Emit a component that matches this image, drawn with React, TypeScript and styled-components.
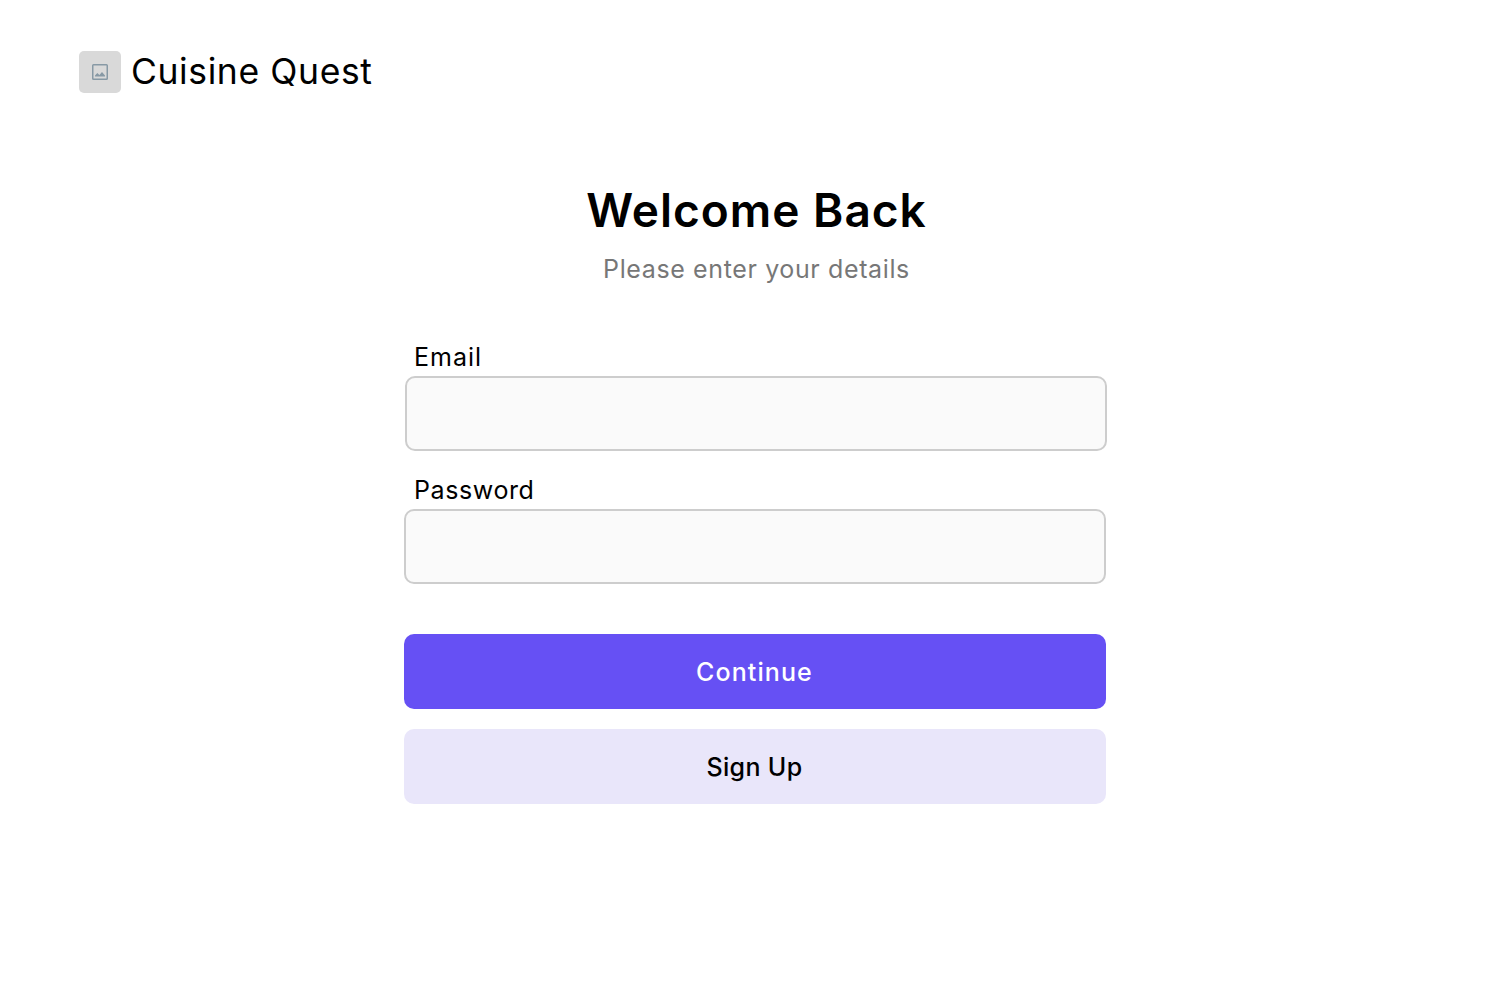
import React from "react";
import styled, { createGlobalStyle } from "styled-components";

const GlobalStyle = createGlobalStyle`
  *, *::before, *::after { box-sizing: border-box; }
  body {
    margin: 0;
    background: #fff;
    color: #000;
    font-family: Inter, "Open Sans", sans-serif;
  }
`;

const Page = styled.div`
  display: flex;
  flex-direction: column;
  min-height: 982px;
`;

const Header = styled.header`
  display: flex;
  align-items: center;
  gap: 10px;
  padding: 51px 79px 0;
`;

const Logo = styled.div`
  display: flex;
  align-items: center;
  justify-content: center;
  width: 42px;
  height: 42px;
  border-radius: 5px;
  background: #d9d9d9;
`;

const Brand = styled.span`
  font-size: 35.5px;
  line-height: 42px;
  white-space: nowrap;
  letter-spacing: 0.6px;
`;

const Main = styled.main`
  display: flex;
  flex-direction: column;
  width: 702px;
  margin: 92px 0 0 404px;
`;

const Title = styled.h1`
  margin: 0;
  font-size: 46px;
  font-weight: 600;
  line-height: 51px;
  text-align: center;
  white-space: nowrap;
  letter-spacing: 1px;
  padding-left: 3px;
`;

const Subtitle = styled.p`
  margin: 17px 0 0;
  padding-left: 3px;
  font-size: 25px;
  line-height: 32px;
  text-align: center;
  color: #777;
  letter-spacing: 0.62px;
`;

const Form = styled.form`
  display: flex;
  flex-direction: column;
  margin-top: 56px;
`;

const Field = styled.div`
  display: flex;
  flex-direction: column;
  gap: 2px;
  margin-bottom: 23px;
`;

const Label = styled.label<{ $spacing: number }>`
  padding-left: 10px;
  font-size: 25px;
  line-height: 33px;
  letter-spacing: ${(p) => p.$spacing}px;
`;

const Input = styled.input<{ $shift?: number }>`
  width: 702px;
  height: 75px;
  margin: 0 0 0 ${(p) => p.$shift ?? 0}px;
  padding: 0 20px;
  border: 2px solid #cdcdcd;
  border-radius: 10px;
  background: #fafafa;
  font: inherit;
  font-size: 25px;
  outline: none;
`;

const Actions = styled.div`
  display: flex;
  flex-direction: column;
  gap: 20px;
  margin-top: 27px;
`;

const Button = styled.button<{ $primary?: boolean; $spacing: number }>`
  height: 75px;
  padding: 0 1px 0 0;
  border: 0;
  border-radius: 10px;
  background: ${(p) => (p.$primary ? "#6650f4" : "#e9e6fa")};
  color: ${(p) => (p.$primary ? "#fff" : "#000")};
  font-family: inherit;
  font-size: 25px;
  font-weight: 500;
  line-height: 32px;
  letter-spacing: ${(p) => p.$spacing}px;
`;

const ImageIcon = () => (
  <svg width="16" height="16" viewBox="0 0 16 16" fill="none">
    <rect x="0.75" y="0.75" width="14.5" height="14.5" rx="0.8" stroke="#8799a5" strokeWidth="1.5" />
    <path d="M3 12.5V11.4L5.3 9.1L7.4 11L10 8L13 11.4V12.5Z" fill="#8799a5" />
  </svg>
);

export default function App() {
  return (
    <>
      <GlobalStyle />
      <Page>
        <Header>
          <Logo><ImageIcon /></Logo>
          <Brand>Cuisine Quest</Brand>
        </Header>
        <Main>
          <Title>Welcome Back</Title>
          <Subtitle>Please enter your details</Subtitle>
          <Form onSubmit={(e) => e.preventDefault()}>
            <Field>
              <Label htmlFor="email" $spacing={1}>Email</Label>
              <Input id="email" type="email" $shift={1} />
            </Field>
            <Field>
              <Label htmlFor="password" $spacing={0.6}>Password</Label>
              <Input id="password" type="password" />
            </Field>
            <Actions>
              <Button type="submit" $primary $spacing={1.1}>Continue</Button>
              <Button type="button" $spacing={0.35}>Sign Up</Button>
            </Actions>
          </Form>
        </Main>
      </Page>
    </>
  );
}
